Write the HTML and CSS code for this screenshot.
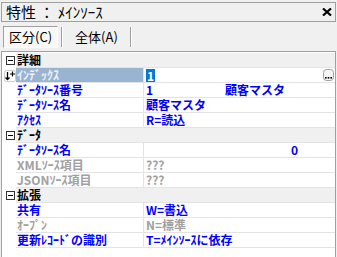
FILE: index.html
```html
<!DOCTYPE html>
<html lang="ja">
<head>
    <meta charset="UTF-8">
    <title>特性</title>
    <link rel="stylesheet" href="styles.css">
</head>
<body>
    <div class="titlebar">
        <span class="title">特性 ： ﾒｲﾝｿｰｽ</span>
        <svg class="close" width="10" height="8" viewBox="0 0 10 8"><path d="M1 0.5 L9 7.5 M9 0.5 L1 7.5" stroke="#000" stroke-width="2.2"/></svg>
    </div>
    <div class="tabs">
        <div class="tab pressed">区分(C)</div>
        <div class="sep"></div>
        <div class="tab">全体(A)</div>
        <div class="sep"></div>
    </div>
    <div class="grid">
        <div class="row cat">
            <span class="gutter"><i class="toggle"></i></span>
            <span class="cat-name">詳細</span>
        </div>
        <div class="row selected">
            <span class="gutter">
                <svg class="sort" width="12" height="12" viewBox="0 0 12 12">
                    <rect x="0.5" y="0.5" width="11" height="11" rx="2" fill="#fff" stroke="#c8c8c8"/>
                    <path d="M3.5 2 V9.5 M1.5 7.5 L3.5 9.5 L5.5 7.5" stroke="#000" stroke-width="1.3" fill="none"/>
                    <path d="M8.5 1.5 V6.5 M6 4 H11" stroke="#000" stroke-width="1.2"/>
                </svg>
            </span>
            <span class="name">ｲﾝﾃﾞｯｸｽ</span>
            <span class="value">
                <span class="hl">1</span>
                <svg class="more" width="11" height="12" viewBox="0 0 11 12">
                    <rect x="0.5" y="0.5" width="10" height="11" rx="3" fill="#f4f4f4" stroke="#a0a0a0"/>
                    <rect x="2" y="8" width="1.6" height="1.6" fill="#000"/>
                    <rect x="4.7" y="8" width="1.6" height="1.6" fill="#000"/>
                    <rect x="7.4" y="8" width="1.6" height="1.6" fill="#000"/>
                </svg>
            </span>
        </div>
        <div class="row">
            <span class="gutter"></span>
            <span class="name">ﾃﾞｰﾀｿｰｽ番号</span>
            <span class="value split"><span>1</span><span>顧客マスタ</span></span>
        </div>
        <div class="row">
            <span class="gutter"></span>
            <span class="name">ﾃﾞｰﾀｿｰｽ名</span>
            <span class="value">顧客マスタ</span>
        </div>
        <div class="row">
            <span class="gutter"></span>
            <span class="name">ｱｸｾｽ</span>
            <span class="value">R=読込</span>
        </div>
        <div class="row cat">
            <span class="gutter"><i class="toggle"></i></span>
            <span class="cat-name">ﾃﾞｰﾀ</span>
        </div>
        <div class="row">
            <span class="gutter"></span>
            <span class="name">ﾃﾞｰﾀｿｰｽ名</span>
            <span class="value split"><span></span><span class="num">0</span></span>
        </div>
        <div class="row off">
            <span class="gutter"></span>
            <span class="name">XMLｿｰｽ項目</span>
            <span class="value">???</span>
        </div>
        <div class="row off">
            <span class="gutter"></span>
            <span class="name">JSONｿｰｽ項目</span>
            <span class="value">???</span>
        </div>
        <div class="row cat">
            <span class="gutter"><i class="toggle"></i></span>
            <span class="cat-name">拡張</span>
        </div>
        <div class="row">
            <span class="gutter"></span>
            <span class="name">共有</span>
            <span class="value">W=書込</span>
        </div>
        <div class="row off">
            <span class="gutter"></span>
            <span class="name">ｵｰﾌﾟﾝ</span>
            <span class="value">N=標準</span>
        </div>
        <div class="row">
            <span class="gutter"></span>
            <span class="name">更新ﾚｺｰﾄﾞの識別</span>
            <span class="value">T=ﾒｲﾝｿｰｽに依存</span>
        </div>
    </div>
</body>
</html>
```

FILE: styles.css
```css
body {
    margin: 0;
    height: 257px;
    overflow: hidden;
    background-color: #f0f0f0;
    color: #000;
    font-family: "Noto Sans CJK JP", sans-serif;
    font-size: 12px;
}
.titlebar {
    margin: 2px 1px 0;
    height: 18px;
    border: 1px solid #a0a0a0;
    display: flex;
    align-items: center;
    justify-content: space-between;
    padding: 0 3px 0 4px;
}
.title {
    font-size: 15px;
    line-height: 18px;
}
.tabs {
    display: flex;
    align-items: center;
    height: 22px;
    margin: 4px 0 0 3px;
}
.tab {
    height: 20px;
    line-height: 20px;
    padding: 0 7px;
    font-size: 13px;
}
.tab.pressed {
    border: 1px solid;
    border-color: #a0a0a0 #fff #fff #a0a0a0;
    background-color: #f8f8f8;
    padding: 0 5px;
}
.sep {
    width: 0;
    height: 20px;
    border-left: 1px solid #a0a0a0;
    border-right: 1px solid #fff;
    margin: 0 3px;
}
.tab + .sep + .tab {
    padding: 0 9px;
}
.grid {
    margin: 3px 1px 0;
    border: 1px solid #a0a0a0;
    border-bottom: none;
    background-color: #fff;
    height: 210px;
    padding-top: 1px;
}
.row {
    display: grid;
    grid-template-columns: 14px 127px 1fr;
    height: 15px;
    line-height: 14px;
    font-weight: bold;
    color: #0000ff;
}
.row > span:not(.gutter) {
    border-bottom: 1px solid #e3e3e3;
    white-space: nowrap;
}
.gutter {
    display: flex;
    align-items: center;
    justify-content: center;
}
.name {
    padding-left: 1px;
}
.value {
    border-left: 1px solid #e3e3e3;
    padding-left: 2px;
    display: flex;
    align-items: center;
}
.split {
    display: grid;
    grid-template-columns: 79px 75px;
}
.num {
    text-align: right;
    padding-right: 2px;
}
.cat .cat-name {
    grid-column: 2 / 4;
    background-color: #f0f0f0;
    color: #000;
    padding-left: 1px;
}
.toggle {
    display: block;
    width: 7px;
    height: 7px;
    border: 1px solid #333;
    position: relative;
    margin-left: 3px;
}
.toggle::after {
    content: "";
    position: absolute;
    left: 1px;
    top: 3px;
    width: 5px;
    height: 1px;
    background-color: #000;
}
.sort {
    margin-left: 1px;
}
.selected .name {
    background-color: #99b4d1;
    color: #eef3f9;
}
.hl {
    background-color: #0078d7;
    color: #fff;
    padding: 0 1px;
    line-height: 13px;
}
.more {
    margin-left: auto;
    margin-right: 1px;
}
.off {
    color: #a0a0a0;
}
```
